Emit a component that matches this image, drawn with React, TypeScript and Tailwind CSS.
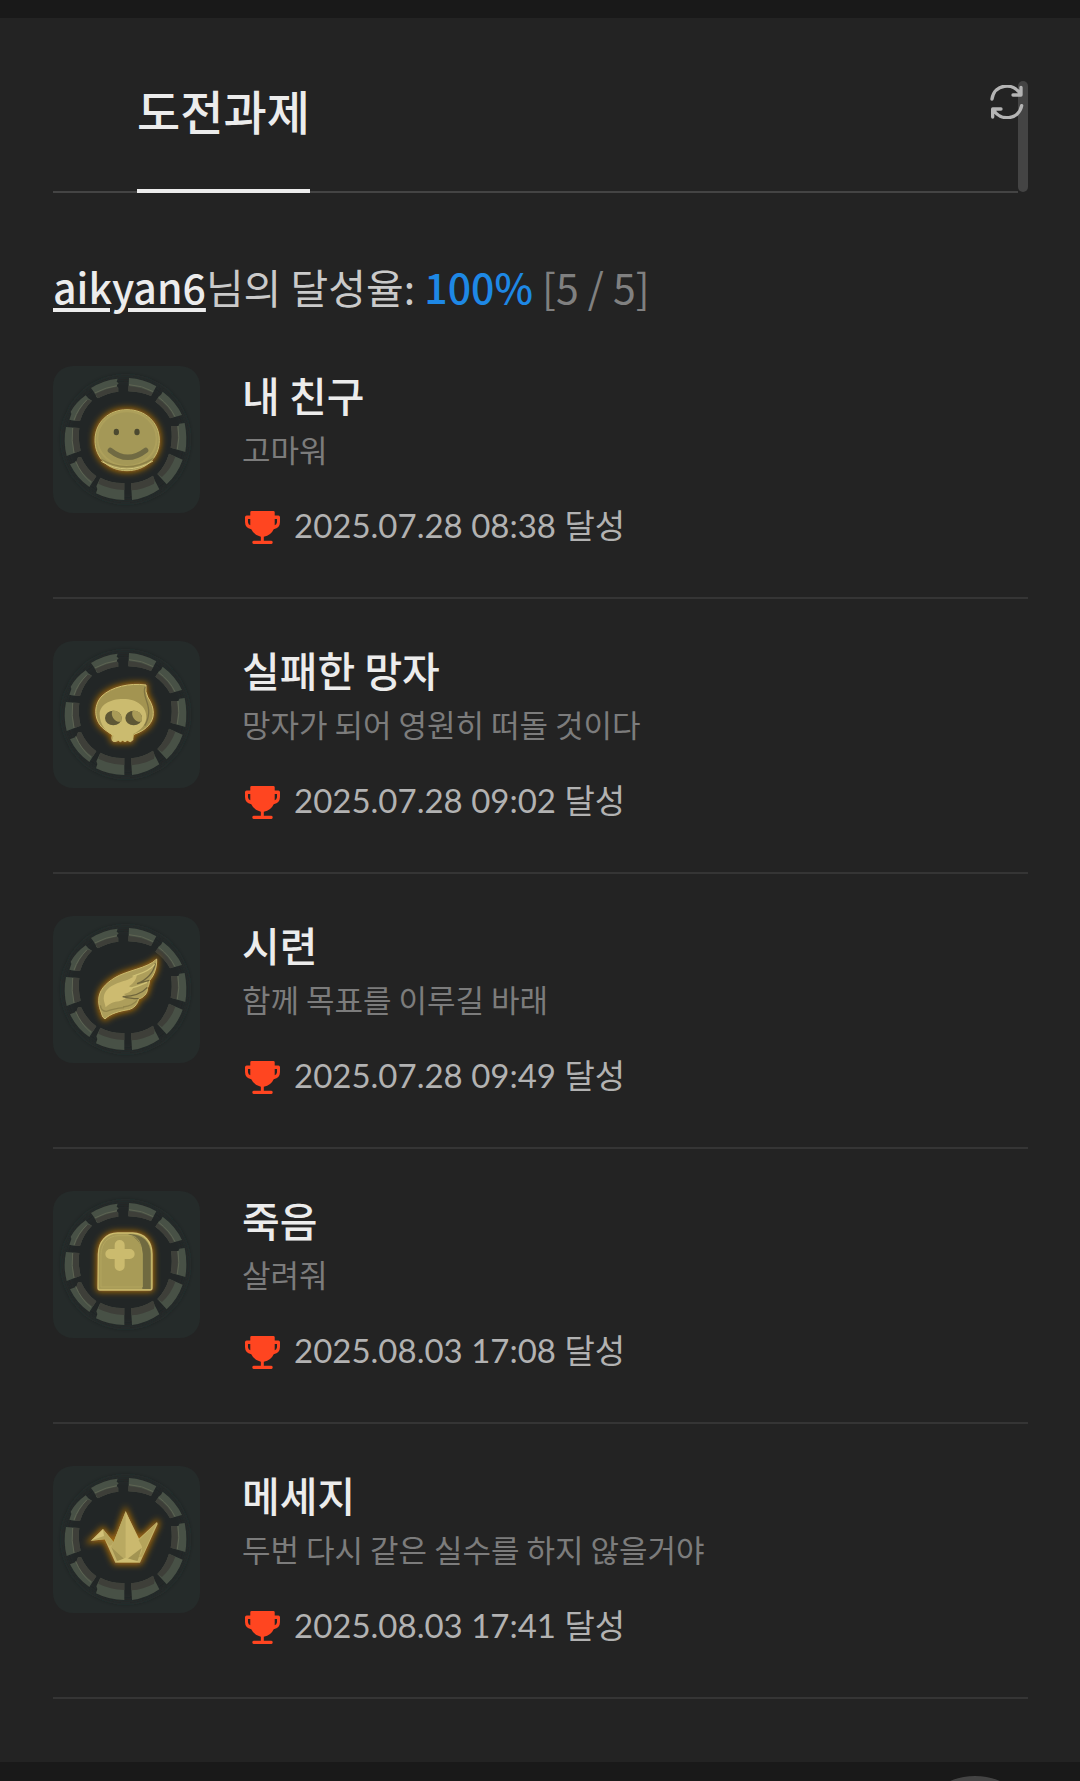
import type { ReactNode } from "react";

type Kind = "smile" | "skull" | "wing" | "grave" | "crane";

interface Achievement {
  kind: Kind;
  title: string;
  description: string;
  date: string;
}

const achievements: Achievement[] = [
  { kind: "smile", title: "내 친구", description: "고마워", date: "2025.07.28 08:38" },
  { kind: "skull", title: "실패한 망자", description: "망자가 되어 영원히 떠돌 것이다", date: "2025.07.28 09:02" },
  { kind: "wing", title: "시련", description: "함께 목표를 이루길 바래", date: "2025.07.28 09:49" },
  { kind: "grave", title: "죽음", description: "살려줘", date: "2025.08.03 17:08" },
  { kind: "crane", title: "메세지", description: "두번 다시 같은 실수를 하지 않을거야", date: "2025.08.03 17:41" },
];

/* Ten stone blocks: whole block, its shaded inner half, and the lit ridge. */
const blocks = [
  { d: "M249 54Q292 56 331 79L315 108Q283 95 247 94Z", inner: "M247 78Q285 80 320 98L315 108Q283 95 247 94Z", ridge: "M249 74Q288 76 322 95" },
  { d: "M350 95Q389 124 408 165L372 175Q357 146 328 125L339 109L345 104Z", inner: "M335 115Q368 138 384 171L372 175Q357 146 328 125Z", ridge: "M338 112Q371 136 387 170" },
  { d: "M375 199L397 198L400 191L416 189Q425 232 418 276L374 263Q380 232 375 199Z", inner: "M375 199L393 198Q399 234 391 268L374 263Q380 232 375 199Z", ridge: "M396 198Q402 234 394 268" },
  { d: "M369 281L410 299Q395 342 362 373L334 342Q358 317 369 281Z", inner: "M369 281L388 290Q376 325 348 351L334 342Q358 317 369 281Z", ridge: "" },
  { d: "M255 370Q292 366 321 347L326 361L332 372L340 388Q302 415 258 420Z", inner: "M255 370Q292 366 321 347L326 361L324 371Q292 388 256 391Z", ridge: "" },
  { d: "M163 353Q197 371 235 369L235 420Q189 420 150 400L154 387L151 379Z", inner: "M163 353Q197 371 235 369L235 390Q193 389 157 371Z", ridge: "" },
  { d: "M72 313L91 305L96 292L105 291Q122 328 151 349L130 381Q92 355 72 313Z", inner: "M91 305L96 292L105 291Q122 328 151 349L140 365Q108 344 91 305Z", ridge: "M89 304Q104 342 135 367" },
  { d: "M60 201L100 204Q95 235 104 272L62 288Q51 244 60 201Z", inner: "M82 203L100 204Q95 235 104 272L86 279Q77 240 82 203Z", ridge: "M80 204Q75 242 84 279" },
  { d: "M70 179L76 162L74 155Q90 127 119 106L127 115L138 122Q113 146 102 183L84 182Z", inner: "M125 119L138 122Q113 146 102 183L86 182Q98 146 125 119Z", ridge: "M123 119Q95 146 84 180" },
  { d: "M135 84Q173 60 215 56L212 65L218 70L211 77L217 83L217 95Q184 98 156 115L151 111L148 102Z", inner: "M148 102Q181 84 215 80L217 95Q184 98 156 115Z", ridge: "M146 99Q181 81 213 77" },
];

const silhouettes: Record<Kind, string> = {
  smile: "M147 241C147 187 188 149 243 149C298 149 340 187 340 241C340 295 297 332 243 332C188 332 147 295 147 241Z",
  skull: "M300 150C251 143 196 156 168 183C139 213 146 261 174 282C183 290 193 294 199 300Q196 311 199 317Q203 321 211 319L217 316L223 320L230 316L237 320L244 316L253 320Q260 318 260 309Q260 300 266 297C292 289 316 270 321 245C325 219 314 201 305 186Q297 171 300 150Z",
  wing: "M332 147C306 175 242 181 207 203C176 222 158 243 158 271C158 294 166 305 167 312Q169 323 177 327C192 311 221 303 247 299C264 295 274 284 278 267C290 264 306 251 304 235Q309 228 311 211C325 196 333 171 332 147Z",
  grave: "M157 207C158 170 180 144 215 144H260C296 145 318 170 318 207V309Q318 315 312 315H162Q156 315 156 309Z",
  crane: "M239 153L277 238L333 186L335 192L282 308H208L176 238L134 243L171 207L203 246Z",
};

const details: Record<Kind, ReactNode> = {
  smile: (
    <>
      <path d={silhouettes.smile} fill="#a49857" stroke="#c6b96e" strokeWidth="3" />
      <ellipse cx="243" cy="236" rx="89" ry="82" fill="none" stroke="#b4a55d" strokeWidth="6" opacity=".6" />
      <path d="M164 297Q242 344 323 295" fill="none" stroke="#81753f" strokeWidth="4" opacity=".7" />
      <path d="M166 304Q242 350 321 303" fill="none" stroke="#d1c47b" strokeWidth="3" />
      <ellipse cx="211" cy="216" rx="8" ry="10" fill="#4b4930" />
      <ellipse cx="273" cy="216" rx="8" ry="10" fill="#4b4930" />
      <path d="M193 271Q245 313 299 271" fill="none" stroke="#706a43" strokeWidth="16" strokeLinecap="round" />
    </>
  ),
  skull: (
    <>
      <path d={silhouettes.skull} fill="#a39451" stroke="#d0bf72" strokeWidth="3" />
      <path d="M161 239C160 210 191 192 232 192C273 192 302 215 301 247C300 269 285 286 262 297V315L253 320L244 316L237 320L230 316L223 320L217 316L205 320L199 315L202 302C178 289 162 268 161 239Z" fill="#cbbb6f" />
      <path d="M298 155C286 178 311 202 308 234Q306 257 296 272" fill="none" stroke="#746a3d" strokeWidth="4" opacity=".75" />
      <ellipse cx="202" cy="249" rx="25" ry="22" fill="#5e5735" />
      <ellipse cx="263" cy="249" rx="25" ry="22" fill="#5e5735" />
      <path d="M199 227C219 225 232 243 226 260C209 264 192 244 199 227ZM260 227C280 225 293 243 287 260C270 264 253 244 260 227Z" fill="#a99b58" />
    </>
  ),
  wing: (
    <>
      <path d={silhouettes.wing} fill="#ad9e5b" stroke="#c9b96e" strokeWidth="3" />
      <path d="M174 273C168 230 214 219 245 209Q264 201 273 193Q271 215 249 229L261 235Q255 248 234 252L243 260Q232 274 208 275Q187 281 179 292Z" fill="#cdbb70" />
      <path d="M328 160Q320 202 273 221Q289 216 310 211M304 232Q281 258 230 260Q260 267 278 266" fill="none" stroke="#70663c" strokeWidth="4" />
      <path d="M326 163C304 190 274 191 260 199M303 217Q276 229 250 236" fill="none" stroke="#d0c276" strokeWidth="4" />
      <path d="M273 271Q261 287 231 291M163 286Q165 304 181 304Q202 296 234 293" fill="none" stroke="#81743f" strokeWidth="4" opacity=".6" />
    </>
  ),
  grave: (
    <>
      <path d={silhouettes.grave} fill="#a89b57" />
      <path d="M246 147C274 157 289 180 289 207V312H314V207C314 171 290 146 246 147Z" fill="#706a40" />
      <path d={silhouettes.grave} fill="none" stroke="#cdbd70" strokeWidth="4" />
      <path d="M165 208C166 176 186 153 216 152H258Q285 157 289 207V306H165Z" fill="none" stroke="#b7a961" strokeWidth="3" opacity=".7" />
      <path d="M221 180V243M193 207H251" fill="none" stroke="#cbbb6e" strokeWidth="30" strokeLinecap="round" />
    </>
  ),
  crane: (
    <>
      <path d={silhouettes.crane} fill="#c3b26a" />
      <path d="M239 155L196 262L239 301Z" fill="#b9a961" />
      <path d="M239 155V301L291 260Z" fill="#cbb96e" />
      <path d="M171 208L137 241L177 238L190 257L196 256L202 246Z" fill="#b5a45c" />
      <path d="M171 208L137 241L174 228Z" fill="#d2c278" />
      <path d="M332 189L278 241L287 258Q293 274 277 291L288 290Z" fill="#b5a45b" />
      <path d="M196 262L239 301L287 264L275 302H213Z" fill="#a39452" />
      <path d="M208 306L239 293L282 306Z" fill="#cebe72" />
    </>
  ),
};

function Badge({ kind, label }: { kind: Kind; label: string }) {
  const glow = `glow-${kind}`;
  return (
    <svg viewBox="21 18 441 441" role="img" aria-label={label} className="size-[147px] shrink-0 rounded-[20px] bg-[#252b2a]">
      <defs>
        <filter id={glow} x="-40%" y="-40%" width="180%" height="180%">
          <feGaussianBlur stdDeviation="10" />
        </filter>
        <filter id={`${glow}-shade`} x="-20%" y="-20%" width="140%" height="140%">
          <feGaussianBlur stdDeviation="10" />
        </filter>
      </defs>
      <circle cx="239" cy="238" r="185" fill="#202726" filter={`url(#${glow}-shade)`} />
      {blocks.map((block) => (
        <g key={block.d}>
          <path d={block.d} fill="#485146" />
          <path d={block.inner} fill="#3e3f39" />
          {block.ridge && <path d={block.ridge} fill="none" stroke="#5e6453" strokeWidth="3" />}
        </g>
      ))}
      <path d={silhouettes[kind]} fill="#a66a0c" stroke="#a66a0c" strokeWidth="12" filter={`url(#${glow})`} />
      {details[kind]}
    </svg>
  );
}

function Trophy() {
  return (
    <svg viewBox="0 0 106 100" aria-hidden="true" className="mt-1 h-[33px] w-[35px] shrink-0 fill-[#ff4520]">
      <path
        fillRule="evenodd"
        d="M20 0H86Q90 0 90 4V14H101Q106 14 106 19V33Q106 51 87 55Q79 73 57 78V90H80Q84 90 84 95T80 100H26Q22 100 22 95T26 90H48V78Q27 73 19 55Q0 51 0 33V19Q0 14 5 14H16V4Q16 0 20 0ZM9 24V34Q10 41 16 43V24ZM90 24V43Q96 41 97 34V24Z"
      />
    </svg>
  );
}

function RefreshIcon() {
  return (
    <svg viewBox="268 106 102 102" aria-hidden="true" className="size-[34px] fill-none stroke-[#b4b4b4]" strokeWidth="10" strokeLinecap="round" strokeLinejoin="round">
      <path d="M274 148C281 102 338 97 359 133M361 113V136H337" />
      <path d="M363 168C354 212 298 215 279 181M301 178H276V202" />
    </svg>
  );
}

export default function App() {
  return (
    <div className="min-h-screen bg-[#191919] pt-[18px] font-['Noto_Sans_CJK_KR',sans-serif]">
      <main className="bg-[#232323] pt-[63px] pr-[52px] pb-[63px] pl-[53px]">
        <header className="relative flex">
          <nav className="flex h-28 flex-1 border-b-2 border-[#444444] pl-[84px]">
            <a href="#achievements" aria-current="page" className="-mb-0.5 border-b-4 border-[#ececec] text-[47px] leading-[58px] font-medium text-[#ececec]">
              도전과제
            </a>
          </nav>
          <div className="h-[111px] w-2.5 rounded-full bg-[#444444]" />
          <button type="button" aria-label="새로고침" className="absolute top-1 right-1">
            <RefreshIcon />
          </button>
        </header>

        <section id="achievements">
          <p className="mt-[63px] mb-2 text-[41px] leading-[60px] text-[#cacaca]">
            <a href="#profile" className="font-medium text-[#ececec] underline decoration-4 underline-offset-4">aikyan6</a>
            님의 달성율: <strong className="font-medium text-[#1e88e5]">100%</strong>{" "}
            <span className="text-[#808080]">[5 / 5]</span>
          </p>
          <ul>
            {achievements.map((item) => (
              <li key={item.title} className="flex gap-[42px] border-b-2 border-[#353535] pt-[42px] pb-[47px]">
                <Badge kind={item.kind} label={item.title} />
                <div className="min-w-0 flex-1">
                  <h2 className="text-[41px] leading-[56px] font-medium text-[#ececec]">{item.title}</h2>
                  <p className="text-[31px] leading-[54px] text-[#7c7c7c]">{item.description}</p>
                  <p className="mt-6 flex items-center gap-3.5 pl-[3px] font-[Lato,'Noto_Sans_CJK_KR',sans-serif] text-[33px] leading-[50px] text-[#b2b2b2]">
                    <Trophy />
                    <span>{item.date} 달성</span>
                  </p>
                </div>
              </li>
            ))}
          </ul>
        </section>
      </main>
      <div className="flex h-[19px] justify-end overflow-hidden pr-10">
        <button type="button" aria-label="맨 위로" className="mt-3.5 size-[130px] shrink-0 rounded-full bg-[#444444]" />
      </div>
    </div>
  );
}
